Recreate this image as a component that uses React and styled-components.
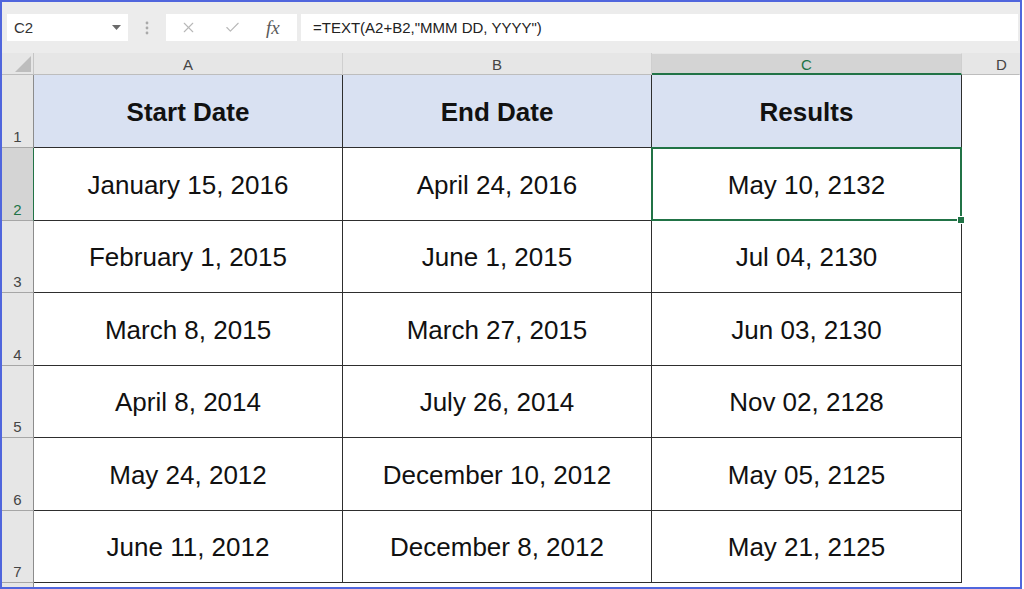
import styled, { createGlobalStyle } from 'styled-components'
import { X, Check } from 'lucide-react'

const GlobalStyle = createGlobalStyle`
    body {
        margin: 0;
        background: #ffffff;
        font-family: "Liberation Sans", Arial, sans-serif;
    }
`

const rows = [
    { h: 73, cells: ['January 15, 2016', 'April 24, 2016', 'May 10, 2132'] },
    { h: 72, cells: ['February 1, 2015', 'June 1, 2015', 'Jul 04, 2130'] },
    { h: 73, cells: ['March 8, 2015', 'March 27, 2015', 'Jun 03, 2130'] },
    { h: 72, cells: ['April 8, 2014', 'July 26, 2014', 'Nov 02, 2128'] },
    { h: 73, cells: ['May 24, 2012', 'December 10, 2012', 'May 05, 2125'] },
    { h: 72, cells: ['June 11, 2012', 'December 8, 2012', 'May 21, 2125'] },
]

const App = () => {
    return (
        <>
            <GlobalStyle />
            <Frame>
                <Toolbar>
                    <NameBox>
                        <span>C2</span>
                        <svg width="9" height="5" viewBox="0 0 9 5">
                            <polygon points="0,0 9,0 4.5,5" fill="#6a6a6a" />
                        </svg>
                    </NameBox>
                    <Grip>
                        <svg width="4" height="14" viewBox="0 0 4 14">
                            <circle cx="2" cy="2" r="1.4" fill="#a9a9a9" />
                            <circle cx="2" cy="7" r="1.4" fill="#a9a9a9" />
                            <circle cx="2" cy="12" r="1.4" fill="#a9a9a9" />
                        </svg>
                    </Grip>
                    <FxBox>
                        <X size={17} color="#b8b8b8" strokeWidth={1.6} />
                        <Check size={17} color="#b8b8b8" strokeWidth={1.6} />
                        <FxGlyph>fx</FxGlyph>
                    </FxBox>
                    <FormulaBox>=TEXT(A2+B2,"MMM DD, YYYY")</FormulaBox>
                </Toolbar>

                <Sheet>
                    <Corner>
                        <svg width="16" height="16" viewBox="0 0 16 16">
                            <polygon points="16,0 16,16 0,16" fill="#bdbdbd" />
                        </svg>
                    </Corner>
                    <ColHead>A</ColHead>
                    <ColHead>B</ColHead>
                    <ColHead $active>C</ColHead>
                    <ColHead $last>D</ColHead>

                    <RowHead $h={73}>1</RowHead>
                    <Cell $header>Start Date</Cell>
                    <Cell $header>End Date</Cell>
                    <Cell $header>Results</Cell>
                    <Blank />

                    {rows.map((row, i) => (
                        <Row key={i}>
                            <RowHead $h={row.h} $active={i === 0}>{i + 2}</RowHead>
                            {row.cells.map((text, j) => (
                                <Cell key={j} $selected={i === 0 && j === 2}>
                                    {text}
                                    {i === 0 && j === 2 && <Handle />}
                                </Cell>
                            ))}
                            <Blank />
                        </Row>
                    ))}

                    <RowHead $h={40} />
                    <Blank />
                    <Blank />
                    <Blank />
                    <Blank />
                </Sheet>
            </Frame>
        </>
    )
}

const Row = ({ children }) => <>{children}</>

const Frame = styled.div`
    width: 1022px;
    height: 589px;
    box-sizing: border-box;
    border: 2px solid #5066dd;
    background: #ececec;
    display: flex;
    flex-direction: column;
    overflow: hidden;
`

const Toolbar = styled.div`
    height: 51px;
    flex-shrink: 0;
    box-sizing: border-box;
    padding: 12px 2px 0 5px;
    display: flex;
    align-items: flex-start;
`

const NameBox = styled.div`
    width: 121px;
    height: 27px;
    box-sizing: border-box;
    background: #ffffff;
    display: flex;
    align-items: center;
    justify-content: space-between;
    padding: 0 7px 0 7px;
    font-size: 15px;
    color: #333;
`

const Grip = styled.div`
    width: 38px;
    height: 27px;
    display: flex;
    align-items: center;
    justify-content: center;
`

const FxBox = styled.div`
    width: 131px;
    height: 27px;
    box-sizing: border-box;
    background: #ffffff;
    display: flex;
    align-items: center;
    gap: 27px;
    padding-left: 14px;
`

const FxGlyph = styled.span`
    font-family: "Liberation Serif", "Times New Roman", serif;
    font-style: italic;
    font-size: 19px;
    color: #5a5a5a;
    margin-left: -2px;
`

const FormulaBox = styled.div`
    flex: 1;
    margin-left: 4px;
    height: 27px;
    background: #ffffff;
    box-sizing: border-box;
    padding-left: 12px;
    display: flex;
    align-items: center;
    font-size: 15px;
    color: #222;
`

const Sheet = styled.div`
    display: grid;
    grid-template-columns: 32px 309px 309px 310px 1fr;
    grid-auto-rows: min-content;
    grid-template-rows: 22px;
    background: #ffffff;
`

const Corner = styled.div`
    background: #e6e6e6;
    border-right: 1px solid #c6c6c6;
    border-bottom: 1px solid #bdbdbd;
    box-sizing: border-box;
    display: flex;
    align-items: flex-end;
    justify-content: flex-end;
    padding: 0 2px 2px 0;
`

const ColHead = styled.div`
    background: ${p => (p.$active ? '#d4d4d4' : '#e6e6e6')};
    color: ${p => (p.$active ? '#217346' : '#444')};
    border-right: 1px solid ${p => (p.$last ? '#e6e6e6' : '#cfcfcf')};
    border-bottom: ${p => (p.$active ? '2px solid #217346' : '1px solid #bdbdbd')};
    border-top: ${p => (p.$active ? '1px solid #e6e6e6' : 'none')};
    box-sizing: border-box;
    display: flex;
    align-items: center;
    justify-content: center;
    font-size: 15px;
    padding-top: 1px;
    padding-left: ${p => (p.$last ? '22px' : '0')};
`

const RowHead = styled.div`
    height: ${p => p.$h}px;
    box-sizing: border-box;
    background: ${p => (p.$active ? '#d4d4d4' : '#e6e6e6')};
    color: ${p => (p.$active ? '#217346' : '#444')};
    border-right: ${p => (p.$active ? '1px solid #217346' : '1px solid #8c8c8c')};
    border-bottom: 1px solid #a6a6a6;
    display: flex;
    align-items: flex-end;
    justify-content: center;
    padding-bottom: 2px;
    font-size: 15px;
`

const Cell = styled.div`
    position: relative;
    box-sizing: border-box;
    background: ${p => (p.$header ? '#d9e1f2' : '#ffffff')};
    border-right: 1px solid #2e2e2e;
    border-bottom: 1px solid #2e2e2e;
    display: flex;
    align-items: center;
    justify-content: center;
    padding-top: 2px;
    font-size: 26px;
    font-weight: ${p => (p.$header ? 700 : 400)};
    color: #111;

    ${p => p.$selected && `
        &::after {
            content: "";
            position: absolute;
            top: -1px;
            left: -1px;
            right: -1px;
            bottom: -1px;
            border: 2px solid #217346;
            pointer-events: none;
        }
    `}
`

const Handle = styled.span`
    position: absolute;
    right: -4px;
    bottom: -4px;
    width: 6px;
    height: 6px;
    background: #217346;
    border: 1px solid #ffffff;
    z-index: 2;
`

const Blank = styled.div`
    background: #ffffff;
`

export default App
